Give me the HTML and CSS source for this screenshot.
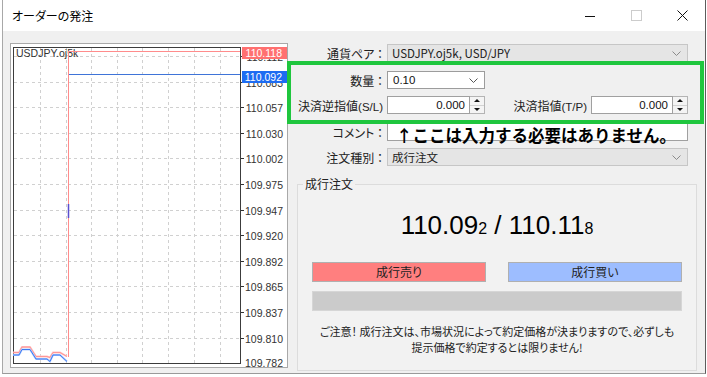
FILE: index.html
```html
<!DOCTYPE html>
<html>
    <head>
        <meta charset="utf-8">
        <link rel="stylesheet" href="styles.css">
        <title>オーダーの発注</title>
    </head>
    <body>
        <div class="window">
            <div class="titlebar">
                <span class="title">オーダーの発注</span>
                <div class="caption">
                    <span class="cap-btn">
                        <svg width="10" height="10"><line x1="0" y1="5.5" x2="10" y2="5.5" stroke="#111"/></svg>
                    </span>
                    <span class="cap-btn">
                        <svg width="11" height="11"><rect x="0.5" y="0.5" width="10" height="10" fill="none" stroke="#cccccc"/></svg>
                    </span>
                    <span class="cap-btn">
                        <svg width="11" height="11"><path d="M0.5 0.5 L10.5 10.5 M10.5 0.5 L0.5 10.5" stroke="#111" fill="none"/></svg>
                    </span>
                </div>
            </div>

            <div class="client">
                <!-- chart -->
                <div class="chart">
                    <svg width="278" height="325" viewBox="0 0 278 325">
                        <rect x="0.5" y="0.5" width="277" height="324" fill="#fff" stroke="#a9a9a9"/>
                        <g stroke="#d0d0d0" stroke-dasharray="3 3">
                            <line x1="30.5" y1="5" x2="30.5" y2="320"/>
                            <line x1="56.5" y1="5" x2="56.5" y2="320"/>
                            <line x1="81.5" y1="5" x2="81.5" y2="320"/>
                            <line x1="107.5" y1="5" x2="107.5" y2="320"/>
                            <line x1="132.5" y1="5" x2="132.5" y2="320"/>
                            <line x1="158.5" y1="5" x2="158.5" y2="320"/>
                            <line x1="184.5" y1="5" x2="184.5" y2="320"/>
                            <line x1="210.5" y1="5" x2="210.5" y2="320"/>
                            <line x1="4" y1="13.5" x2="230" y2="13.5"/>
                            <line x1="4" y1="39.5" x2="230" y2="39.5"/>
                            <line x1="4" y1="64.5" x2="230" y2="64.5"/>
                            <line x1="4" y1="90.5" x2="230" y2="90.5"/>
                            <line x1="4" y1="115.5" x2="230" y2="115.5"/>
                            <line x1="4" y1="141.5" x2="230" y2="141.5"/>
                            <line x1="4" y1="167.5" x2="230" y2="167.5"/>
                            <line x1="4" y1="192.5" x2="230" y2="192.5"/>
                            <line x1="4" y1="218.5" x2="230" y2="218.5"/>
                            <line x1="4" y1="243.5" x2="230" y2="243.5"/>
                            <line x1="4" y1="269.5" x2="230" y2="269.5"/>
                            <line x1="4" y1="295.5" x2="230" y2="295.5"/>
                        </g>
                        <rect x="3.5" y="4.5" width="227" height="316" fill="none" stroke="#3c3c3c"/>
                        <g stroke="#333">
                            <line x1="231" y1="13.5" x2="234" y2="13.5"/>
                            <line x1="231" y1="39.5" x2="234" y2="39.5"/>
                            <line x1="231" y1="64.5" x2="234" y2="64.5"/>
                            <line x1="231" y1="90.5" x2="234" y2="90.5"/>
                            <line x1="231" y1="115.5" x2="234" y2="115.5"/>
                            <line x1="231" y1="141.5" x2="234" y2="141.5"/>
                            <line x1="231" y1="167.5" x2="234" y2="167.5"/>
                            <line x1="231" y1="192.5" x2="234" y2="192.5"/>
                            <line x1="231" y1="218.5" x2="234" y2="218.5"/>
                            <line x1="231" y1="243.5" x2="234" y2="243.5"/>
                            <line x1="231" y1="269.5" x2="234" y2="269.5"/>
                            <line x1="231" y1="295.5" x2="234" y2="295.5"/>
                        </g>
                        <g class="axis">
                            <text x="273" y="18">110.112</text>
                            <text x="273" y="44">110.083</text>
                            <text x="273" y="69">110.057</text>
                            <text x="273" y="95">110.030</text>
                            <text x="273" y="120">110.002</text>
                            <text x="273" y="146">109.975</text>
                            <text x="273" y="172">109.947</text>
                            <text x="273" y="197">109.920</text>
                            <text x="273" y="223">109.892</text>
                            <text x="273" y="248">109.865</text>
                            <text x="273" y="274">109.837</text>
                            <text x="273" y="300">109.810</text>
                            <text x="273" y="324">109.782</text>
                        </g>
                        <rect x="232" y="4" width="45" height="12" fill="#ff7070"/>
                        <text class="tag" x="272" y="14">110.118</text>
                        <rect x="232" y="28" width="45" height="12" fill="#1d6cf2"/>
                        <text class="tag" x="272" y="38">110.092</text>

                        <text class="symbol" x="6" y="14">USDJPY.oj5k</text>

                        <line x1="58" y1="8.5" x2="230" y2="8.5" stroke="#ff8c8c"/>
                        <line x1="58.5" y1="8" x2="58.5" y2="314" stroke="#ff8c8c"/>
                        <line x1="59" y1="31.5" x2="230" y2="31.5" stroke="#3f74d8"/>
                        <line x1="58.5" y1="161" x2="58.5" y2="175" stroke="#5a4fcf" stroke-width="1.5"/>

                        <polyline points="3,309.5 9,309.5 12,304 20,304 26,313.5 37,313.5 40,314.5 43,309.5 50,309.5 57,313.5"
                                  fill="none" stroke="#ffc4c4" stroke-width="2"/>
                        <polyline points="3,309.5 9,309.5 12,304 20,304 26,313.5 37,313.5 40,314.5 43,309.5 50,309.5 57,313.5"
                                  fill="none" stroke="#ff8a8a" stroke-width="0.8"/>
                        <polyline points="3,312 9,312 12,306.5 20,306.5 26,316 37,316 40,318.5 43,312 50,312 57,318.5"
                                  fill="none" stroke="#b4d0ff" stroke-width="2"/>
                        <polyline points="3,312 9,312 12,306.5 20,306.5 26,316 37,316 40,318.5 43,312 50,312 57,318.5"
                                  fill="none" stroke="#2f6ff0" stroke-width="0.9"/>
                    </svg>
                </div>

                <!-- order form -->
                <div class="panel">
                    <div class="row">
                        <span class="lbl">通貨ペア ：</span>
                        <div class="combo off wide">
                            <span>USDJPY.oj5k, USD/JPY</span>
                            <svg width="9" height="5"><polyline points="0.5,0.5 4.5,4.5 8.5,0.5" fill="none" stroke="#8a8a8a"/></svg>
                        </div>
                    </div>
                    <div class="row gap9">
                        <span class="lbl">数量 ：</span>
                        <div class="combo qty">
                            <span>0.10</span>
                            <svg width="9" height="5"><polyline points="0.5,0.5 4.5,4.5 8.5,0.5" fill="none" stroke="#555"/></svg>
                        </div>
                    </div>
                    <div class="row gap7">
                        <span class="lbl">決済逆指値<span class="lat">(S/L)</span></span>
                        <div class="spinbox">
                            <span class="field sl">0.000</span>
                            <span class="spin"><i class="up"></i><i class="down"></i></span>
                        </div>
                        <span class="lbl tp">決済指値<span class="lat">(T/P)</span></span>
                        <div class="spinbox">
                            <span class="field tpf">0.000</span>
                            <span class="spin"><i class="up"></i><i class="down"></i></span>
                        </div>
                    </div>
                    <div class="row gap9">
                        <span class="lbl">コメント ：</span>
                        <span class="field comment"></span>
                    </div>
                    <div class="row gap7">
                        <span class="lbl">注文種別 ：</span>
                        <div class="combo off wide">
                            <span>成行注文</span>
                            <svg width="9" height="5"><polyline points="0.5,0.5 4.5,4.5 8.5,0.5" fill="none" stroke="#8a8a8a"/></svg>
                        </div>
                    </div>

                    <fieldset class="market">
                        <legend>成行注文</legend>
                        <div class="quote">110.09<small>2</small> / 110.11<small>8</small></div>
                        <div class="actions">
                            <button class="btn sell">成行売り</button>
                            <button class="btn buy">成行買い</button>
                        </div>
                        <div class="progress"></div>
                        <p class="notice">ご注意！ 成行注文は、市場状況によって約定価格が決まりますので、必ずしも<br>提示価格で約定するとは限りません!</p>
                    </fieldset>
                </div>
            </div>

            <!-- annotation -->
            <div class="highlight"></div>
            <div class="note">↑ここは入力する必要はありません。</div>
        </div>
    </body>
</html>
```

FILE: styles.css
```css
html {
    height: 100%;
}
body {
    margin: 0;
    background: #fff;
    font-family: "Noto Sans CJK JP", sans-serif;
    font-size: 12px;
    color: #111;
}

.window {
    position: relative;
    margin-left: 2px;
    width: 704px;
    height: 374px;
    box-sizing: border-box;
    border-left: 1px solid #a8a8a8;
    border-right: 1px solid #5c5c5c;
    border-bottom: 1px solid #9a9a9a;
    background: #f0f0f0;
}

.titlebar {
    display: flex;
    align-items: center;
    height: 31px;
    background: #fff;
}
.title {
    padding-left: 9px;
    font-size: 12px;
    color: #000;
    font-feature-settings: "palt";
}
.caption {
    display: flex;
    margin-left: auto;
    height: 100%;
}
.cap-btn {
    display: flex;
    align-items: center;
    justify-content: center;
    width: 46px;
    height: 100%;
}
.cap-btn svg {
    display: block;
}

.client {
    display: flex;
    padding: 12px 0 0 7px;
}

.chart {
    width: 278px;
    height: 325px;
}
.chart svg {
    display: block;
}
.axis text {
    font: 10.5px "Liberation Sans", sans-serif;
    fill: #333;
    text-anchor: end;
}
.tag {
    font: 10.5px "Liberation Sans", sans-serif;
    fill: #fff;
    text-anchor: end;
}
.symbol {
    font: 10.5px "Liberation Sans", sans-serif;
    fill: #333;
}

.panel {
    margin-left: 9px;
    width: 400px;
    padding-top: 1px;
}

.row {
    display: flex;
    align-items: center;
    height: 18px;
}
.gap9 {
    margin-top: 9px;
}
.gap7 {
    margin-top: 7px;
}

.lbl {
    width: 86px;
    margin-right: 4px;
    text-align: right;
    white-space: nowrap;
    font-feature-settings: "palt";
    color: #222;
}
.lbl.tp {
    width: 100px;
    margin-left: 2px;
    margin-right: 0;
    padding-right: 4px;
}
.lat {
    font-family: "Liberation Sans", sans-serif;
    font-size: 11.5px;
}

.combo {
    display: flex;
    align-items: center;
    justify-content: space-between;
    height: 18px;
    box-sizing: border-box;
    padding: 0 6px 0 4px;
    border: 1px solid #c6c6c6;
    font-size: 11.5px;
    font-feature-settings: "palt";
}
.combo.off {
    background: #e5e5e5;
    color: #222;
}
.combo.wide {
    width: 301px;
}
.combo.qty {
    width: 98px;
    background: #fff;
    border-color: #9c9c9c;
    padding-left: 5px;
    font-family: "Liberation Sans", sans-serif;
}
.combo svg {
    display: block;
}

.spinbox {
    display: flex;
    height: 18px;
}
.field {
    display: block;
    height: 18px;
    box-sizing: border-box;
    background: #fff;
    border: 1px solid #a0a0a0;
    font: 11.5px/16px "Liberation Sans", sans-serif;
    text-align: right;
    padding-right: 4px;
    color: #111;
}
.field.sl {
    width: 83px;
}
.field.tpf {
    width: 82px;
}
.field.comment {
    width: 301px;
}
.spin {
    display: flex;
    flex-direction: column;
    width: 15px;
    height: 18px;
    box-sizing: border-box;
    border: 1px solid #b4b4b4;
    border-left: none;
    background: #f4f4f4;
}
.spin i {
    flex: 1;
    display: flex;
    align-items: center;
    justify-content: center;
}
.spin i + i {
    border-top: 1px solid #d2d2d2;
}
.spin i::after {
    content: "";
    border-left: 3px solid transparent;
    border-right: 3px solid transparent;
}
.spin .up::after {
    border-bottom: 3px solid #111;
}
.spin .down::after {
    border-top: 3px solid #111;
}

.market {
    margin: 10px 0 0;
    padding: 0 14px 15px;
    border: 1px solid #dcdcdc;
    background: #f2f2f2;
}
.market legend {
    margin-left: -9px;
    padding: 0 2px;
    line-height: 16px;
    font-feature-settings: "palt";
    color: #222;
}

.quote {
    margin-top: 18px;
    text-align: center;
    font: 26px/30px "Liberation Sans", sans-serif;
    color: #000;
}
.quote small {
    font-size: 16px;
}

.actions {
    display: flex;
    justify-content: space-between;
    margin-top: 18px;
}
.btn {
    width: 174px;
    height: 20px;
    padding: 0;
    border: 1px solid #b0b0b0;
    font-family: "Noto Sans CJK JP", sans-serif;
    font-size: 12px;
    line-height: 16px;
    color: #222;
    font-feature-settings: "palt";
}
.btn.sell {
    background: #ff7f7f;
}
.btn.buy {
    background: #9dbdff;
}

.progress {
    height: 20px;
    margin-top: 9px;
    box-sizing: border-box;
    background: #cbcbcb;
    border: 1px solid #d6d6d6;
}

.notice {
    margin: 12px 0 0;
    text-align: center;
    white-space: nowrap;
    font-size: 11px;
    line-height: 16px;
    font-feature-settings: "palt";
    color: #222;
}

/* green annotation box and remark */
.highlight {
    position: absolute;
    left: 284px;
    top: 61px;
    width: 417px;
    height: 63px;
    box-sizing: border-box;
    border: 4px solid #1fc63e;
}
.note {
    position: absolute;
    left: 393px;
    top: 127px;
    font-size: 16.5px;
    line-height: 16.5px;
    font-weight: bold;
    color: #000;
    white-space: nowrap;
}
```
